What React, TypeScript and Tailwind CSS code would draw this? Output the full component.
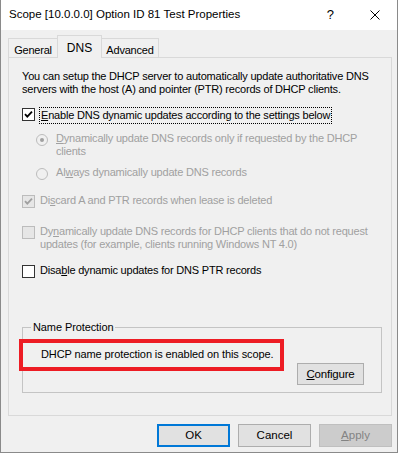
import React from "react";

const ui = "font-['Liberation_Sans',Arial,sans-serif]";

function Check({ checked, disabled }: { checked?: boolean; disabled?: boolean }) {
  return (
    <span
      className={
        "mt-px flex h-[13px] w-[13px] shrink-0 items-center justify-center border " +
        (disabled ? "border-[#bcbcbc] bg-[#e6e6e6]" : "border-[#333333] bg-white")
      }
    >
      {checked && (
        <svg width="11" height="11" viewBox="0 0 11 11">
          <path
            d="M2 5.2 L4.3 7.6 L9 2.6"
            fill="none"
            stroke={disabled ? "#a0a0a0" : "#000"}
            strokeWidth="1.8"
          />
        </svg>
      )}
    </span>
  );
}

function Radio({ checked }: { checked?: boolean }) {
  return (
    <span className="mt-[2px] flex h-[12px] w-[12px] shrink-0 items-center justify-center rounded-full border border-[#bcbcbc] bg-[#f0f0f0]">
      {checked && <span className="h-[4px] w-[4px] rounded-full bg-[#a0a0a0]" />}
    </span>
  );
}

function Tab({ label, active, w }: { label: string; active?: boolean; w: string }) {
  return (
    <div
      className={
        "-ml-px flex justify-center border border-b-0 border-[#d9d9d9] first:ml-0 " +
        w +
        (active
          ? " h-[23px] bg-[#f0f0f0] pt-[3px] text-[12px]"
          : " mb-px h-[19px] bg-[#f0f0f0] pt-[3px] text-[11px] tracking-[-0.2px]")
      }
    >
      {label}
    </div>
  );
}

export default function App() {
  return (
    <div className={"h-[454px] w-[400px] bg-white " + ui}>
      <div className="flex h-[453px] w-[398px] flex-col border border-t-0 border-[#8a8a8a] bg-[#f0f0f0] text-black">
        {/* title bar */}
        <div className="flex h-[30px] items-center bg-white pl-2 text-[11.5px]">
          <span className="flex-1">Scope [10.0.0.0] Option ID 81 Test Properties</span>
          <span className="mr-[36px] text-[13px]">?</span>
          <svg width="10" height="10" viewBox="0 0 10 10" className="mr-[17px]">
            <path d="M0.5 0.5 L9.5 9.5 M9.5 0.5 L0.5 9.5" stroke="#000" strokeWidth="1" />
          </svg>
        </div>

        <div className="flex flex-col pl-[7px] pt-[5px]">
          {/* tabs */}
          <div className="relative z-10 -mb-px flex h-[23px] items-end">
            <Tab label="General" w="w-[50px]" />
            <Tab label="DNS" w="w-[45px]" active />
            <Tab label="Advanced" w="w-[58px]" />
          </div>

          {/* tab page */}
          <div className="flex h-[359px] w-[384px] flex-col border border-[#d9d9d9] bg-[#f0f0f0] pl-[13px] pt-[12px] text-[11px] leading-[13px] tracking-[-0.2px]">
            <p>
              You can setup the DHCP server to automatically update authoritative DNS
              <br />
              servers with the host (A) and pointer (PTR) records of DHCP clients.
            </p>

            <div className="mt-[11px] flex items-start gap-[4px]">
              <Check checked />
              <span className="border border-dotted border-black px-px py-px">
                <u>E</u>nable DNS dynamic updates according to the settings below
              </span>
            </div>

            <div className="ml-[14px] mt-[8px] flex items-start gap-[8px] text-[#a0a0a0]">
              <Radio checked />
              <span>
                <u>D</u>ynamically update DNS records only if requested by the DHCP
                <br />
                clients
              </span>
            </div>

            <div className="ml-[14px] mt-[8px] flex items-start gap-[8px] text-[#a0a0a0]">
              <Radio />
              <span>
                Al<u>w</u>ays dynamically update DNS records
              </span>
            </div>

            <div className="mt-[14px] flex items-start gap-[5px] text-[#a0a0a0]">
              <Check checked disabled />
              <span>
                Di<u>s</u>card A and PTR records when lease is deleted
              </span>
            </div>

            <div className="mt-[17px] flex items-start gap-[5px] text-[#a0a0a0]">
              <Check disabled />
              <span>
                Dy<u>n</u>amically update DNS records for DHCP clients that do not request
                <br />
                updates (for example, clients running Windows NT 4.0)
              </span>
            </div>

            <div className="mt-[13px] flex items-start gap-[5px]">
              <Check />
              <span>
                Disa<u>b</u>le dynamic updates for DNS PTR records
              </span>
            </div>

            {/* Name Protection group */}
            <div className="relative mt-[49px] flex h-[66px] w-[360px] flex-col border border-[#c4c4c4] pl-[18px] pr-[17px] pt-[18px] text-[11px] leading-[16px] tracking-[-0.1px]">
              <span className="absolute left-[8px] top-[-9px] bg-[#f0f0f0] px-[2px]">Name Protection</span>
              <span>DHCP name protection is enabled on this scope.</span>
              <div className="mt-px flex justify-end">
                <button className="h-[22px] w-[67px] border border-[#adadad] bg-[#e1e1e1] text-[11.5px] tracking-[-0.2px]">
                  <u>C</u>onfigure
                </button>
              </div>
              <div className="pointer-events-none absolute left-[-4px] top-[11px] h-[32px] w-[265px] border-4 border-[#ed1c24]" />
            </div>
          </div>

          {/* dialog buttons */}
          <div className="mt-[8px] flex justify-end gap-[8px] pr-[5px] text-[11.5px]">
            <button className="h-[23px] w-[73px] border-2 border-[#0078d7] bg-[#e1e1e1]">OK</button>
            <button className="h-[23px] w-[73px] border border-[#adadad] bg-[#e1e1e1]">Cancel</button>
            <button className="h-[23px] w-[73px] border border-[#bfbfbf] bg-[#cccccc] text-[#838383]">
              <u>A</u>pply
            </button>
          </div>
        </div>
      </div>
    </div>
  );
}
